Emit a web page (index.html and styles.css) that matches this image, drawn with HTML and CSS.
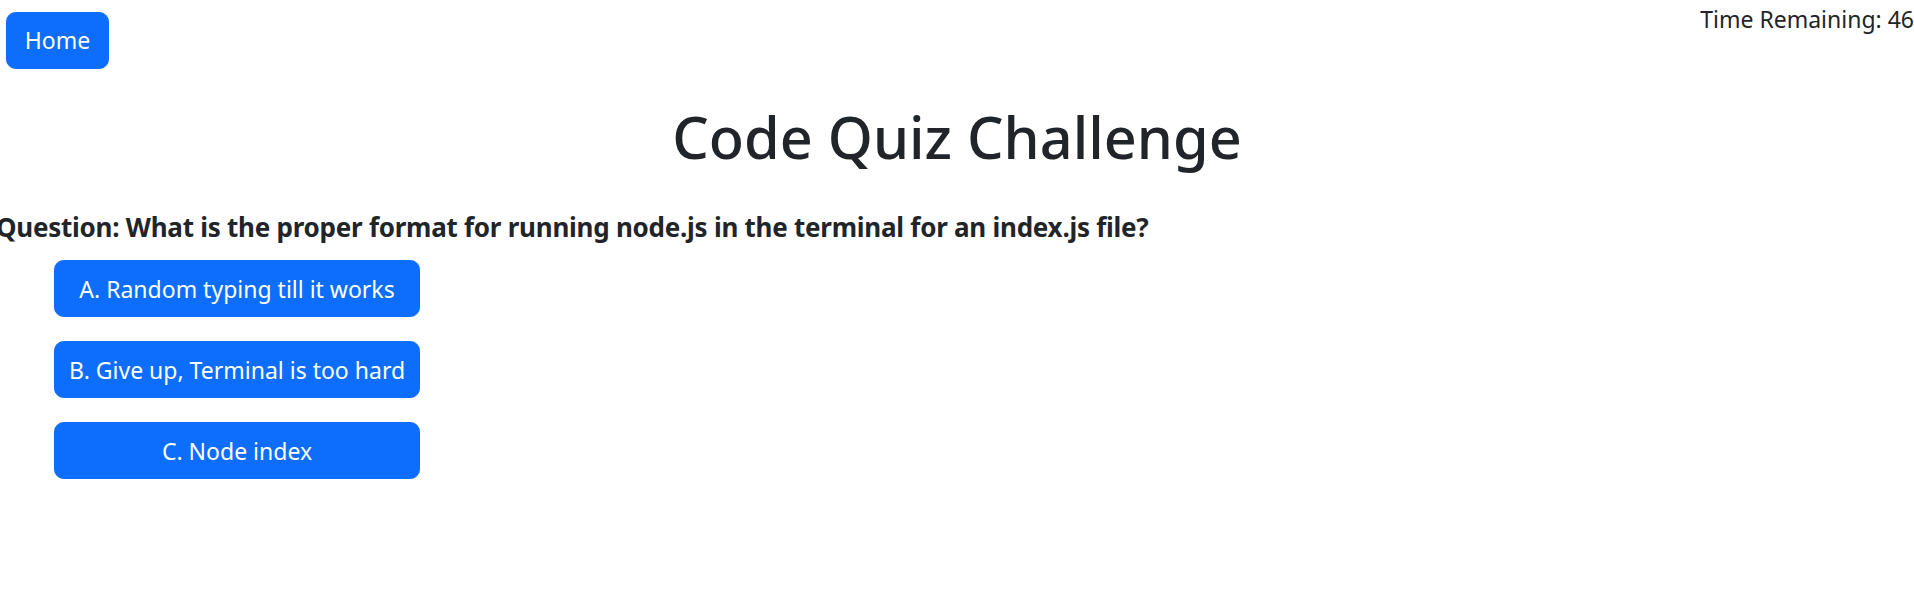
FILE: index.html
```html
<!DOCTYPE html>
<html lang="en">
<head>
<meta charset="utf-8">
<title>Code Quiz</title>
<link rel="stylesheet" href="styles.css">
</head>
<body>
<header class="topbar">
  <a class="btn btn-home" href="#">Home</a>
  <span class="timer">Time Remaining: 46</span>
</header>
<main class="quiz">
  <h1 class="title">Code Quiz Challenge</h1>
  <h4 class="question">Question: What is the proper format for running node.js in the terminal for an index.js file?</h4>
  <div class="answers">
    <button class="btn btn-answer">A. Random typing till it works</button>
    <button class="btn btn-answer">B. Give up, Terminal is too hard</button>
    <button class="btn btn-answer">C. Node index</button>
  </div>
</main>
</body>
</html>
```
FILE: styles.css
```css
html, body {
  margin: 0;
  padding: 0;
  background: #fff;
}
body {
  font-family: "Noto Sans", "Liberation Sans", sans-serif;
  font-size: 19.2px;
  line-height: 1.5;
  color: #212529;
  overflow: hidden;
}
.topbar {
  display: flex;
  justify-content: space-between;
  align-items: flex-start;
}
.btn {
  display: inline-flex;
  align-items: center;
  justify-content: center;
  box-sizing: border-box;
  background: #0d6efd;
  color: #fff;
  border: 1px solid #0d6efd;
  border-radius: 9.6px;
  font-family: inherit;
  font-size: 23px;
  line-height: 1.5;
  text-decoration: none;
  cursor: pointer;
}
.btn-home {
  margin: 12px 0 0 6px;
  width: 103px;
  height: 57px;
}
.timer {
  margin: 2px 0 0;
  font-size: 23px;
}
.title {
  margin: 33px 0 0;
  text-align: center;
  font-size: 57.6px;
  font-weight: 500;
  line-height: 1.2;
}
.question {
  margin: 41px 0 0 -4px;
  font-size: 26px;
  font-weight: 700;
  letter-spacing: -0.25px;
  line-height: 1.2;
  white-space: nowrap;
}
.answers {
  display: flex;
  flex-direction: column;
  gap: 24px;
  margin: 17px 0 0 54px;
}
.btn-answer {
  width: 366px;
  height: 57px;
}
```
